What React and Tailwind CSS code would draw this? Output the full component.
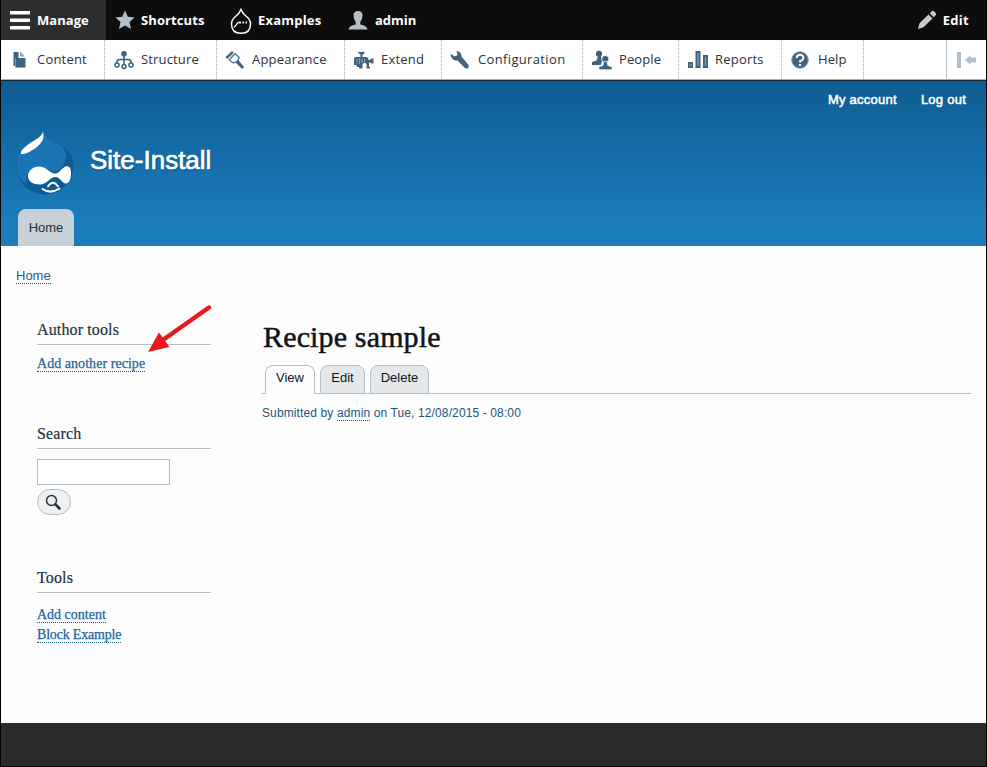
const SANS = "font-['Liberation_Sans',Arial,sans-serif]";
const SERIF = "font-['Liberation_Serif',Georgia,serif]";
const BAR = "font-['Open_Sans','Noto_Sans',sans-serif]";

function Ico({ children }) {
  return (
    <svg className="h-5 w-5 shrink-0" viewBox="0 0 20 20" fill="#3d637e">
      {children}
    </svg>
  );
}

const ContentIcon = () => (
  <Ico>
    <path d="M3.500 2h5v6h7v9.500h-10v-1.500h-2z" />
    <path d="M10 1.500l5 5h-5z" fill="#8ea5b5" />
    <path d="M5.500 8v9" stroke="#8ea5b5" strokeWidth=".8" />
  </Ico>
);
const StructureIcon = () => (
  <Ico>
    <path d="M10 4v12M3 14v-2q0-2.500 3-2.500h8q3 0 3 2.500v2" fill="none" stroke="#35617f" strokeWidth="1.600" />
    <circle cx="10" cy="3.800" r="2.800" />
    <circle cx="3" cy="15" r="2" fill="#fff" stroke="#35617f" strokeWidth="1.500" />
    <circle cx="10" cy="16.500" r="2" fill="#fff" stroke="#35617f" strokeWidth="1.500" />
    <circle cx="17" cy="15" r="2" fill="#fff" stroke="#35617f" strokeWidth="1.500" />
  </Ico>
);
const AppearanceIcon = () => (
  <Ico>
    <path d="M.5 7L7 1l1.800 1.800L2.300 9z" />
    <path d="M4 10l6-6.300 4.200 3.800-1.700 3.500-4 2z" fill="#fff" stroke="#54748a" strokeWidth="1.300" />
    <path d="M11 11.500l2.200-1.500 5.800 7-1.800 2-5.700-5.500z" />
  </Ico>
);
const ExtendIcon = () => (
  <Ico>
    <path d="M4.500 1.500q3 1 6 0v2L8.500 4.500V7H12q2.500 0 2.500 3H16l1.500-1.500h2v5h-2L16 12.500h-1V17h1v1.500h-3.500V14q-1.500-2-4 0v4.500H5V17H2.500v-2H0V8.500Q0 7 2 7h4.500V4.500l-2-1z" />
    <circle cx="18.200" cy="11" r="1" fill="#d33" />
    <path d="M3 8.500V14M5.500 8.500V14M8 8.500V13M10.500 8.500V13" stroke="#9db1bf" strokeWidth=".8" />
  </Ico>
);
const ConfigIcon = () => (
  <Ico>
    <path d="M6.500 1q5 .5 5 5.500l7 8.500q1 2-.5 3t-3 0L7.500 10.500Q2.500 11 .8 6V3.800L4.500 6.500 7.500 5.200z" />
  </Ico>
);
const PeopleIcon = () => (
  <Ico>
    <circle cx="7" cy="3.800" r="3.100" />
    <path d="M6 6h3l1 5-1 4H0v-3l4.500-1.500z" />
    <circle cx="13.300" cy="9" r="3.600" stroke="#fff" strokeWidth=".8" />
    <path d="M11.800 11.500h3l1 4 4.200 1.200v3H7v-3l4-1.200z" stroke="#fff" strokeWidth=".6" />
  </Ico>
);
const ReportsIcon = () => (
  <Ico>
    <path d="M0 12h5v6H0zM7.500 1h5v17h-5zM15 5h5v13h-5z" />
    <path d="M1.500 13.500h2v3h-2zM9.200 3h1.600v13H9.200zM16.700 7h1.600v9h-1.600z" fill="#7993a5" />
  </Ico>
);
const HelpIcon = () => (
  <Ico>
    <circle cx="10" cy="10" r="8.300" />
    <circle cx="10" cy="10" r="8.300" fill="none" stroke="#8ca3b3" />
    <path d="M6.800 8q0-3.200 3.300-3.200T13.300 8q0 1.800-3.200 3.200v1.300M10 14v2" fill="none" stroke="#fff" strokeWidth="2" />
  </Ico>
);

const trayItems = [
  { label: "Content", icon: <ContentIcon />, w: "w-[104px] pl-[9px]", t: "ml-[7px] tracking-[0.200px]" },
  { label: "Structure", icon: <StructureIcon />, w: "w-[112px] pl-[9px]", t: "ml-[7px] tracking-[0.150px]" },
  { label: "Appearance", icon: <AppearanceIcon />, w: "w-[128px] pl-[8px]", t: "ml-[7px] tracking-[0.200px]" },
  { label: "Extend", icon: <ExtendIcon />, w: "w-[97px] pl-[9px]", t: "ml-[7px] tracking-[0.200px]" },
  { label: "Configuration", icon: <ConfigIcon />, w: "w-[141px] pl-[8px]", t: "ml-[8px] tracking-[0.350px]" },
  { label: "People", icon: <PeopleIcon />, w: "w-[96px] pl-[9px]", t: "ml-[7px] tracking-[0.100px]" },
  { label: "Reports", icon: <ReportsIcon />, w: "w-[103px] pl-[9px]", t: "ml-[7px] tracking-[0.200px]" },
  { label: "Help", icon: <HelpIcon />, w: "w-[82px] pl-[8px]", t: "ml-[8px] tracking-[0.100px]" },
];

function TopBar() {
  return (
    <nav className={`flex h-10 bg-[#0d0d0d] text-[13px] leading-5 font-bold text-white ${BAR}`}>
      <a className="flex w-[105px] items-center bg-[#2c2d2f] pl-2">
        <svg className="h-5 w-[22px]" viewBox="0 0 22 20" fill="#fff">
          <path d="M1 1h20v3.500H1zM1 8.500h20V12H1zM1 16h20v3.500H1z" />
        </svg>
        <span className="ml-[6px] tracking-[0.050px]">Manage</span>
      </a>
      <a className="flex w-[115px] items-center pl-[9px]">
        <svg className="h-5 w-5" viewBox="0 0 20 20" fill="#b5bfc8">
          <path d="M10 .5l2.800 6.300 6.800.7-5.100 4.600 1.500 6.900-6-3.600-6 3.600 1.500-6.900L.4 7.500l6.800-.7z" />
        </svg>
        <span className="ml-[6px] tracking-[0.100px]">Shortcuts</span>
      </a>
      <a className="flex w-[119px] items-center pl-[9px]">
        <svg className="mt-[3px] h-[27px] w-[22px]" viewBox="0 0 22 27" fill="none" stroke="#fff" strokeWidth="1.500">
          <path d="M11 1.500Q12.500 5.500 16.500 8.500q4 3 4 7.500Q20.500 25.300 11 25.300T1.500 16q0-4.500 4-7.500Q9.500 5.500 11 1.500z" />
          <path d="M4 19.500l4.500-5.500" strokeWidth="1.200" />
          <path d="M9 14.500h2M12.500 14.500h1.500M15.500 14.500h1.500" strokeWidth="1.800" />
        </svg>
        <span className="ml-[6px] tracking-[0.200px]">Examples</span>
      </a>
      <a className="flex flex-1 items-center pl-[8px]">
        <svg className="h-5 w-5" viewBox="0 0 20 20" fill="#b5bfc8">
          <path d="M5.500 5.500Q5.500 1 10 1t4.500 4.500q0 4-2.200 6.500v2.500q6.700 1 7.200 5H.5q.5-4 7.200-5V12Q5.500 9.500 5.500 5.500z" />
        </svg>
        <span className="ml-[7px]">admin</span>
      </a>
      <a className="flex items-center pr-[17px]">
        <svg className="h-5 w-5" viewBox="0 0 20 20" fill="#c3cbd2">
          <path d="M2.500 13.200L11.500 4.500l4 4-9 8.800L1 19zM12.700 3.300l2-2q1.200-1 2.500.2l1.500 1.500q1 1.200 0 2.300l-2 2z" />
        </svg>
        <span className="ml-[6px] tracking-[0.300px]">Edit</span>
      </a>
    </nav>
  );
}

function Tray() {
  return (
    <nav className={`flex h-10 border-b border-[#a6b1ba] bg-white text-[13px] text-[#28323b] ${BAR}`}>
      {trayItems.map((i) => (
        <a key={i.label} className={`flex shrink-0 items-center border-r border-dotted border-[#9fabb5] ${i.w}`}>
          {i.icon}
          <span className={i.t}>{i.label}</span>
        </a>
      ))}
      <div className="ml-auto flex w-[40px] items-center border-l border-[#b5bfc8] pl-[10px]">
        <svg className="h-4 w-5" viewBox="0 0 20 16" fill="#b5bfc8">
          <path d="M0 0h4v16H0zM8 8l5.500-5V5.500H19v5h-5.500V13z" />
        </svg>
      </div>
    </nav>
  );
}

function Logo() {
  return (
    <svg className="h-[66px] w-[60px]" viewBox="0 0 60 66">
      <path d="M27 1C26 8 17 11 9 17 3 22 .5 28 .5 35.500 .5 52 13 64.500 29 64.500S57.500 52 57.500 35.500C57.500 27 53 20 46 16.500 38 12 29 9 27 1z" fill="#0d5b94" />
      <path d="M27 1C26 8 17 11 9 17 3 22 .5 28 .5 35.500 .5 44 4 50 11 54.500 8 41 17 36 26 37c5 .5 9 5 13 4.500 6-1 11-9 11-15 0-5-2-8-4-10C38 12 29 9 27 1z" fill="#1b75b4" />
      <path d="M27 1C26 8 17 10 9 17q-5 4-4 7c6 1 20-8 22-15q1-4 0-8z" fill="#fff" />
      <path d="M12 46c0-6 6-10 12-9.500 7 .5 10 7 15 7s5.500-5 10.500-7c4-1.500 5.500 2 5.500 6 0 7-2 11-5 11-4 0-6-6.500-10.500-6.500-6 0-8 7.500-16 7.500C17 54.500 12 51.500 12 46z" fill="#fff" />
      <path d="M32 56.500q5-7.500 10 0" fill="none" stroke="#fff" strokeWidth="1.800" strokeLinecap="round" />
      <path d="M26.500 59q8 5.500 17-.5" fill="none" stroke="#fff" strokeWidth="2" strokeLinecap="round" />
    </svg>
  );
}

function Header() {
  return (
    <header className={`flex h-[166px] flex-col border-t border-[#12232f] bg-linear-to-b from-[#0f5d92] to-[#1b7cbc] to-85% ${SANS}`}>
      <div className="flex justify-end pt-[9px] pr-[20px] text-[13px] leading-5 text-white [-webkit-text-stroke:0.5px_white]">
        <a className="tracking-[0.250px]">My account</a>
        <a className="ml-[24px] tracking-[0.250px]">Log out</a>
      </div>
      <div className="mt-5 flex pl-[15px]">
        <Logo />
        <h1 className="mt-[13px] ml-[14px] text-[26px] leading-[34px] text-white [-webkit-text-stroke:0.7px_white] [text-shadow:1px_1px_2px_#0c4c7a]">
          Site-Install
        </h1>
      </div>
      <div className="mt-auto ml-[17px] h-[37px] w-[56px] rounded-t-[8px] bg-[#c8d0d7] pt-[9px] text-center text-[13px] leading-5 text-[#25303a]">
        Home
      </div>
    </header>
  );
}

function BlockTitle({ children, className }) {
  return (
    <h2 className={`h-[26px] border-b border-[#b3bfc9] pt-px text-[16px] leading-[20px] text-[#26323c] [-webkit-text-stroke:0.2px_#26323c] ${SERIF} ${className}`}>
      {children}
    </h2>
  );
}

function SideLink({ children, className }) {
  return (
    <a className={`block h-[15px] w-fit border-b border-dotted border-[#0f5f94] text-[14px] leading-[14px] text-[#1c659a] [-webkit-text-stroke:0.25px_#1c659a] ${SERIF} ${className}`}>
      {children}
    </a>
  );
}

function Sidebar() {
  return (
    <aside className="relative w-[174px]">
      <BlockTitle className="tracking-[0.130px]">Author tools</BlockTitle>
      <SideLink className="mt-[12px] tracking-[0.050px]">Add another recipe</SideLink>
      <svg className="absolute -top-[15px] left-[110px] h-[50px] w-[68px]" viewBox="0 0 68 50" fill="#e8191c">
        <path d="M62 3.500L13 38" stroke="#e8191c" strokeWidth="4.500" strokeLinecap="round" />
        <path d="M1 48l11-19.500 10.500 14.500z" />
      </svg>
      <BlockTitle className="mt-[51px] tracking-[0.150px]">Search</BlockTitle>
      <input className="mt-[10px] block h-[26px] w-[133px] border border-[#b3bfc9] bg-white" />
      <button className="mt-1 flex h-[26px] w-[34px] items-center justify-center rounded-[13px] border border-[#b3bfc9] bg-[#eef0f2] pr-0.5 pb-px">
        <svg className="h-4 w-4" viewBox="0 0 16 16" fill="none" stroke="#27333d">
          <circle cx="6.500" cy="6.500" r="5" strokeWidth="1.500" />
          <path d="M10.500 10.500l4 4" strokeWidth="2.600" strokeLinecap="round" />
        </svg>
      </button>
      <BlockTitle className="mt-[52px] tracking-[0.150px]">Tools</BlockTitle>
      <SideLink className="mt-[15px]">Add content</SideLink>
      <SideLink className="mt-[5px] tracking-[-0.180px]">Block Example</SideLink>
    </aside>
  );
}

function Main() {
  return (
    <main className={`w-[709px] ${SANS}`}>
      <h1 className={`h-[46px] pl-px text-[30px] leading-[36px] tracking-[0.150px] text-[#111417] [-webkit-text-stroke:0.5px_#111417] ${SERIF}`}>
        Recipe sample
      </h1>
      <div className="flex h-[29px] text-[13px] leading-[24px] text-[#10171d]">
        <div className="w-[3px] border-b border-[#b3bfc9]" />
        <a className="w-[50px] rounded-t-[8px] border border-b-0 border-[#b3bfc9] text-center">View</a>
        <div className="w-[5px] border-b border-[#b3bfc9]" />
        <a className="w-[45px] rounded-t-[8px] border border-[#b3bfc9] bg-[#e5e8eb] text-center">Edit</a>
        <div className="w-[5px] border-b border-[#b3bfc9]" />
        <a className="w-[59px] rounded-t-[8px] border border-[#b3bfc9] bg-[#e5e8eb] text-center">Delete</a>
        <div className="flex-1 border-b border-[#b3bfc9]" />
      </div>
      <p className="mt-[12px] flex text-[12px] leading-[14px] tracking-[0.120px] whitespace-pre text-[#20567d]">
        <span>Submitted by </span>
        <a className="h-[15px] border-b border-dotted border-[#0f5f94]">admin</a>
        <span> on Tue, 12/08/2015 - 08:00</span>
      </p>
    </main>
  );
}

export default function App() {
  return (
    <div className="flex h-[767px] w-[987px] flex-col overflow-hidden border border-t-0 border-black bg-[#fdfdfd]">
      <TopBar />
      <Tray />
      <Header />
      <div className={`flex pt-[22px] pl-[15px] text-[13px] leading-[15px] text-[#1c5f90] ${SANS}`}>
        <a className="h-[16px] border-b border-dotted border-[#0f5f94]">Home</a>
      </div>
      <div className="flex flex-1 pl-[36px]">
        <div className="pt-[35px]">
          <Sidebar />
        </div>
        <div className="pt-[35px] pl-[51px]">
          <Main />
        </div>
      </div>
      <footer className="h-[43px] bg-[#292a2b]" />
    </div>
  );
}
